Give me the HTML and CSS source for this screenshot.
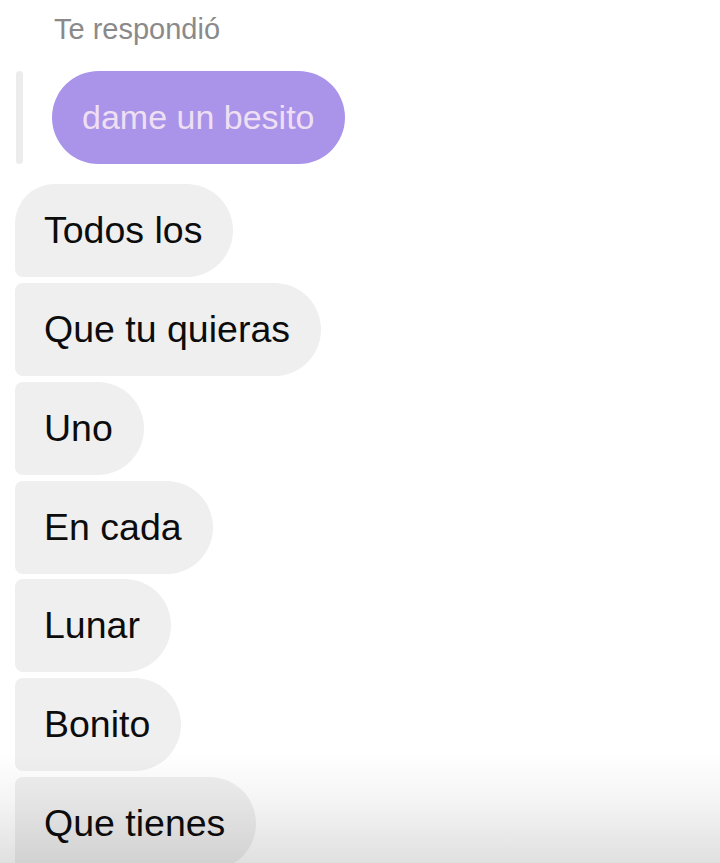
FILE: index.html
```html
<!DOCTYPE html>
<html lang="es">
<head>
<meta charset="utf-8">
<link rel="stylesheet" href="styles.css">
</head>
<body>
<div class="chat">
  <div class="reply-label">Te respondió</div>
  <div class="reply">
    <div class="reply-bar"></div>
    <div class="reply-bubble">dame un besito</div>
  </div>
  <div class="messages">
    <div class="msg first">Todos los</div>
    <div class="msg">Que tu quieras</div>
    <div class="msg">Uno</div>
    <div class="msg">En cada</div>
    <div class="msg">Lunar</div>
    <div class="msg">Bonito</div>
    <div class="msg">Que tienes</div>
  </div>
  <div class="shade"></div>
</div>
</body>
</html>
```
FILE: styles.css
```css
html, body {
  margin: 0;
  padding: 0;
  background: #ffffff;
}
.chat {
  position: relative;
  width: 720px;
  height: 863px;
  overflow: hidden;
  font-family: "Liberation Sans", Arial, sans-serif;
}
.reply-label {
  padding: 13px 0 0 54px;
  height: 71px;
  box-sizing: border-box;
  font-size: 29px;
  line-height: 32px;
  color: #8a8a8a;
}
.reply {
  display: flex;
  align-items: stretch;
  gap: 29px;
  padding-left: 16px;
}
.reply-bar {
  width: 7px;
  border-radius: 4px;
  background: #ececec;
}
.reply-bubble {
  height: 93px;
  box-sizing: border-box;
  padding: 0 30px;
  display: flex;
  align-items: center;
  border-radius: 47px;
  background: #a994ea;
  color: #efdff2;
  font-size: 34px;
}
.messages {
  display: flex;
  flex-direction: column;
  align-items: flex-start;
  gap: 6px;
  padding: 20px 0 0 15px;
}
.msg {
  height: 93px;
  box-sizing: border-box;
  padding: 0 31px 0 29px;
  display: flex;
  align-items: center;
  background: #efefef;
  color: #0c0c0c;
  font-size: 37.5px;
  border-radius: 8px 47px 47px 8px;
}
.msg:nth-child(n+5) {
  margin-top: -1px;
}
.msg:nth-child(n+6) {
  margin-top: 0;
}
.msg.first {
  border-top-left-radius: 40px;
}
.shade {
  position: absolute;
  left: 0;
  right: 0;
  bottom: 0;
  height: 110px;
  background: linear-gradient(to bottom, rgba(0,0,0,0) 0%, rgba(0,0,0,0.04) 40%, rgba(0,0,0,0.12) 100%);
  pointer-events: none;
}
```
